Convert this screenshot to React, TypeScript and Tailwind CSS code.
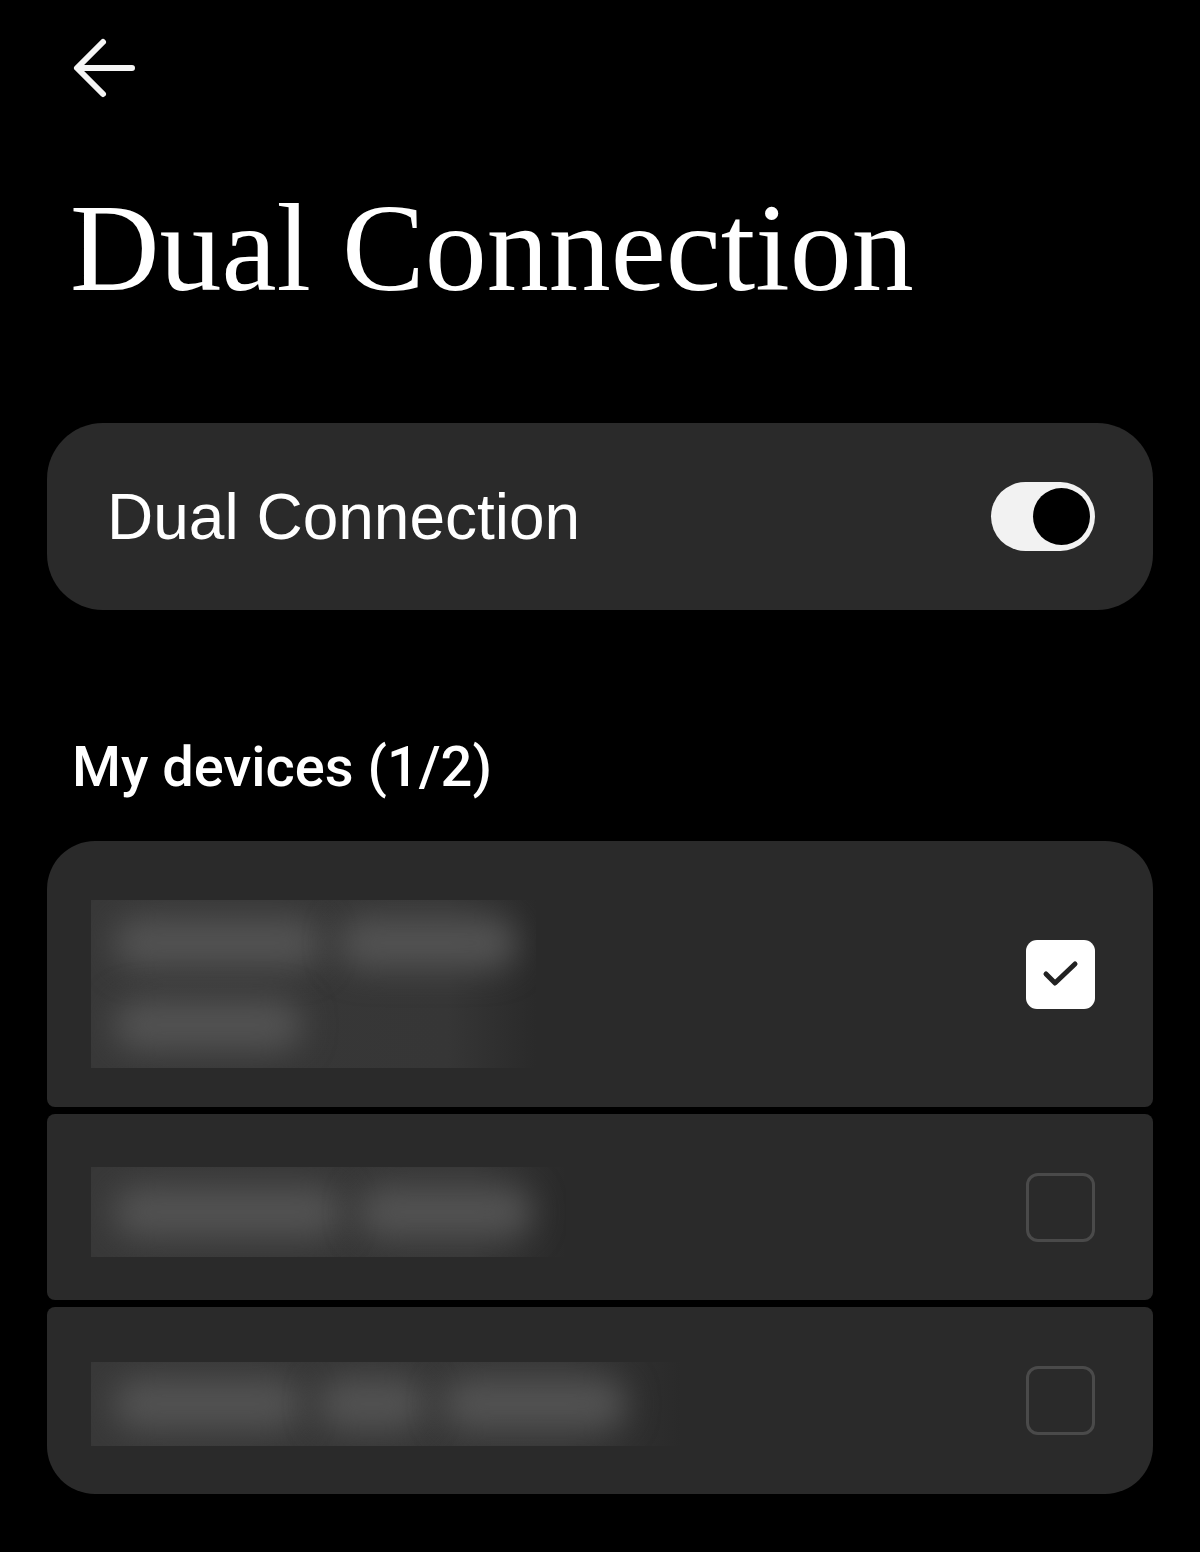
import React from "react";

const sans = { fontFamily: '"Liberation Sans", Arial, sans-serif' };

function Toggle() {
  return (
    <div className="w-[104px] h-[69px] rounded-full bg-[#f2f2f2] flex items-center justify-end pr-[5px] flex-shrink-0">
      <div className="w-[57px] h-[57px] rounded-full bg-black" />
    </div>
  );
}

function Checkbox({ checked }: { checked: boolean }) {
  if (checked) {
    return (
      <div className="w-[69px] h-[69px] rounded-[11px] bg-white flex items-center justify-center flex-shrink-0">
        <svg width="69" height="69" viewBox="0 0 69 69" fill="none">
          <path d="M20 34 L29 43 L49 24" stroke="#222" strokeWidth="5" strokeLinecap="round" strokeLinejoin="round" />
        </svg>
      </div>
    );
  }
  return <div className="w-[69px] h-[69px] rounded-[12px] border-[3px] border-[#4a4a4a] flex-shrink-0" />;
}

// blurred placeholder for the hidden device names
function Blurred({ width, height, lines }: { width: string; height: string; lines: number[][] }) {
  return (
    <div
      className={`${width} ${height} overflow-hidden bg-linear-to-r from-[#383838] via-[#363636] via-80% to-[#2a2a2a] flex flex-col justify-center gap-[30px] pl-[22px]`}
    >
      {lines.map((line, i) => (
        <div key={i} className="flex gap-[14px]">
          {line.map((w, j) => (
            <div key={j} className="h-[52px] rounded-full bg-[#525252] blur-[16px]" style={{ width: w }} />
          ))}
        </div>
      ))}
    </div>
  );
}

export default function App() {
  return (
    <div className="min-h-[1552px] w-[1200px] bg-black text-white" style={sans}>
      <div className="pt-[36px] pl-[72px]">
        <svg width="64" height="64" viewBox="0 0 64 64" fill="none">
          <path d="M6 32 H60 M31 6 L5 32 L31 58" stroke="#f5f5f5" strokeWidth="6" strokeLinecap="round" strokeLinejoin="round" />
        </svg>
      </div>

      <h1
        className="mt-[87px] pl-[70px] text-[124px] leading-none"
        style={{ fontFamily: '"Liberation Serif", "Times New Roman", serif' }}
      >
        Dual Connection
      </h1>

      {/* Main toggle card */}
      <div className="mt-[112px] mx-[47px] h-[187px] rounded-[56px] bg-[#2a2a2a] flex items-center justify-between pl-[60px] pr-[58px]">
        <span className="text-[64px] leading-none">Dual Connection</span>
        <Toggle />
      </div>

      <div
        className="mt-[129px] pl-[72px] text-[56px] leading-none font-medium"
        style={{ fontFamily: 'Roboto, "Liberation Sans", sans-serif' }}
      >
        My devices (1/2)
      </div>

      {/* Device list */}
      <div className="mt-[46px] mx-[47px] flex flex-col gap-[7px]">
        <div className="h-[266px] rounded-t-[48px] rounded-b-[8px] bg-[#2a2a2a] flex items-center justify-between pl-[44px] pr-[58px]">
          <div className="mt-[20px]">
            <Blurred width="w-[445px]" height="h-[168px]" lines={[[210, 180], [190]]} />
          </div>
          <Checkbox checked />
        </div>
        <div className="h-[186px] rounded-[8px] bg-[#2a2a2a] flex items-center justify-between pl-[44px] pr-[58px]">
          <div className="mt-[10px]">
            <Blurred width="w-[475px]" height="h-[90px]" lines={[[230, 175]]} />
          </div>
          <Checkbox checked={false} />
        </div>
        <div className="h-[187px] rounded-t-[8px] rounded-b-[48px] bg-[#2a2a2a] flex items-center justify-between pl-[44px] pr-[58px]">
          <div className="mt-[7px]">
            <Blurred width="w-[590px]" height="h-[84px]" lines={[[190, 110, 185]]} />
          </div>
          <Checkbox checked={false} />
        </div>
      </div>
    </div>
  );
}
